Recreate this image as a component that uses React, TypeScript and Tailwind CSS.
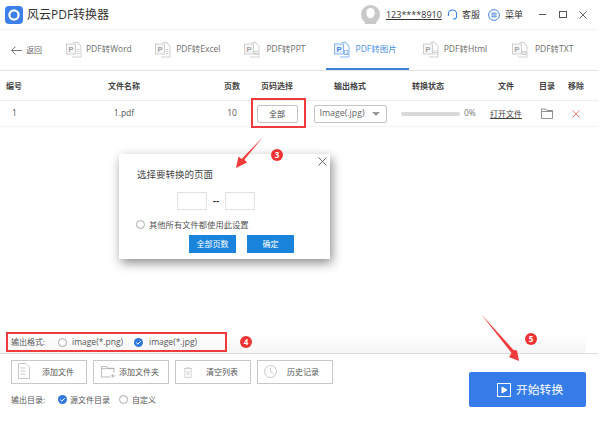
import React from "react";

const FONT = "font-['Open_Sans','Noto_Sans_CJK_SC',sans-serif]";

type Mark = "word" | "excel" | "ppt" | "img" | "html" | "txt";

function TabIcon({ color, mark, active }: { color: string; mark: Mark; active?: boolean }) {
  return (
    <svg width="16" height="17" viewBox="0 0 16 17" fill="none" stroke={color} strokeWidth="0.7">
      <path d="M7.5 1.5 H11 L15 5 V16 H6" fill="#fff" />
      <path d="M10.5 0.5 L14 3.5" opacity="0.6" />
      <rect x="0.5" y="3" width="9" height="10" fill={active ? "#eaf3fd" : "#f7f7f7"} />
      <text x="2.4" y="11" fontSize="7.5" fontWeight="bold" fill={active ? "#3f86e0" : "#a2a2a2"} stroke="none" fontFamily="Liberation Sans">P</text>
      {(mark === "word" || mark === "excel") && <path d="M10.5 8.5h3M10.5 10.5h3M10.5 12.5h3" />}
      {mark === "ppt" && <path d="M10.5 10.5h3.5v3h-3.5zM10.5 12l3.5 1.5" />}
      {mark === "img" && <path d="M10.5 9.5h3.5v4h-3.5zM12 12l2 1.5" />}
      {mark === "html" && <path d="M11 9v5M14 9v5M11 11.5h3" />}
      {mark === "txt" && <path d="M10.5 10.5h3.5v3h-3.5zM10.5 12h3.5" />}
    </svg>
  );
}

function Tab({ label, mark, active, gap }: { label: string; mark: Mark; active?: boolean; gap: string }) {
  return (
    <div className={`w-[83px] mr-[6.2px] h-full flex items-center pl-[8px] border-b-[2px] ${gap} ${active ? "border-[#3f7fd8]" : "border-transparent"}`}>
      <TabIcon color={active ? "#5b9be6" : "#bdbdbd"} mark={mark} active={active} />
      <span className={`text-[8.5px] whitespace-nowrap ${active ? "text-[#4a8fe3]" : "text-[#6e6e6e]"}`}>{label}</span>
    </div>
  );
}

function Radio({ checked }: { checked?: boolean }) {
  if (checked) {
    return (
      <svg width="9" height="9" viewBox="0 0 9 9" className="shrink-0">
        <circle cx="4.5" cy="4.5" r="4.5" fill="#2f78e0" />
        <path d="M2.2 4.6 L3.9 6.2 L6.8 3" stroke="#fff" strokeWidth="1" fill="none" />
      </svg>
    );
  }
  return <span className="w-[9px] h-[9px] shrink-0 rounded-full border border-[#a8a8a8] bg-white" />;
}

function ToolButton({ label, icon, pad }: { label: string; icon: React.ReactNode; pad: string }) {
  return (
    <div className={`w-[76px] h-[24px] border border-[#c8c8c8] bg-white flex items-center relative ${pad}`}>
      {icon}
      <span className="text-[8px] text-[#555] whitespace-nowrap">{label}</span>
    </div>
  );
}

function Badge({ n, cls }: { n: string; cls: string }) {
  return (
    <div className={`absolute ${cls} w-[12px] h-[12px] rounded-full bg-[#ee3333] text-white text-[8px] font-bold flex items-center justify-center`}>{n}</div>
  );
}

const grid = "grid grid-cols-[36px_176px_40px_50px_96px_84px_48px_34px_24px] items-center";

export default function App() {
  return (
    <div className={`relative w-[600px] h-[421px] overflow-hidden bg-white ${FONT}`}>
      <div className="w-[598px] h-full flex flex-col">
        {/* Title bar */}
        <div className="h-[30px] shrink-0 flex items-center border-b border-[#f2f2f2]">
          <svg width="18" height="18" viewBox="0 0 18 18" className="ml-[5px]">
            <rect width="18" height="18" rx="4" fill="#3d80ea" />
            <circle cx="9" cy="9" r="4.6" fill="none" stroke="#fff" strokeWidth="2.2" />
          </svg>
          <span className="ml-[4px] text-[12px] text-[#333]">风云PDF转换器</span>
          <div className="flex-1" />
          <svg width="19" height="19" viewBox="0 0 19 19">
            <circle cx="9.5" cy="9.5" r="9.5" fill="#c9c9c9" />
            <ellipse cx="9.5" cy="8" rx="4.2" ry="5.2" fill="#fff" />
            <path d="M3.5 19 C5 13 14 13 15.5 19 Z" fill="#c9c9c9" />
          </svg>
          <span className="ml-[6px] text-[9px] text-[#333] underline w-[54px] whitespace-nowrap">123****8910</span>
          <svg width="11" height="13" viewBox="0 0 12 13" fill="none" className="ml-[7px]" stroke="#2f78e0" strokeWidth="1.1">
            <path d="M1.5 8 V6 a4.5 4.5 0 0 1 9 0 V8" />
            <path d="M10.5 8 C10.5 10.5 8.5 11.5 6.5 11.5" />
          </svg>
          <span className="ml-[4px] text-[9px] text-[#333]">客服</span>
          <svg width="12" height="12" viewBox="0 0 12 12" fill="none" className="ml-[8px]" stroke="#2f78e0" strokeWidth="0.9">
            <circle cx="6" cy="6" r="5.4" />
            <path d="M3.3 4.2h5.4M3.3 6h5.4M3.3 7.8h5.4" />
          </svg>
          <span className="ml-[5px] text-[9px] text-[#333]">菜单</span>
          <div className="ml-[16px] w-[7px] h-[1px] bg-[#555]" />
          <div className="ml-[13px] w-[8px] h-[7px] border border-[#555]" />
          <svg width="8" height="8" viewBox="0 0 8 8" className="ml-[12px] mr-[11px]" stroke="#555" strokeWidth="0.9">
            <path d="M0.5 0.5 L7.5 7.5 M7.5 0.5 L0.5 7.5" />
          </svg>
        </div>

        {/* Tabs */}
        <div className="h-[41px] shrink-0 flex border-b border-[#e2e2e2]">
          <div className="w-[58px] flex items-center pl-[11px] gap-[4px]">
            <svg width="11" height="9" viewBox="0 0 11 9" fill="none" stroke="#555" strokeWidth="0.8">
              <path d="M4.5 0.5 L0.7 4.5 L4.5 8.5 M0.7 4.5 H11" />
            </svg>
            <span className="text-[8px] text-[#666]">返回</span>
          </div>
          <Tab label="PDF转Word" mark="word" gap="gap-[4px]" />
          <Tab label="PDF转Excel" mark="excel" gap="gap-[5px]" />
          <Tab label="PDF转PPT" mark="ppt" gap="gap-[6px]" />
          <Tab label="PDF转图片" mark="img" gap="gap-[6px]" active />
          <Tab label="PDF转Html" mark="html" gap="gap-[5px]" />
          <Tab label="PDF转TXT" mark="txt" gap="gap-[7px]" />
        </div>

        {/* Table header */}
        <div className={`${grid} h-[30px] shrink-0 border-b border-[#ececec] text-[8px] font-semibold text-[#444] text-center`}>
          <span className="text-left pl-[6px]">编号</span>
          <span>文件名称</span>
          <span>页数</span>
          <span>页码选择</span>
          <span>输出格式</span>
          <span className="pr-[24px]">转换状态</span>
          <span>文件</span>
          <span>目录</span>
          <span>移除</span>
        </div>

        {/* Table row */}
        <div className={`${grid} h-[26px] shrink-0 border-b border-[#f2f2f2] text-[8.5px] text-[#555] text-center`}>
          <span className="text-left pl-[12px]">1</span>
          <span>1.pdf</span>
          <span>10</span>
          <div className="flex justify-center">
            <div className="w-[41px] h-[18px] border border-[#c4c4c4] rounded-[2px] flex items-center justify-center text-[8px] text-[#444]">全部</div>
          </div>
          <div className="flex justify-center">
            <div className="w-[73px] h-[18px] border border-[#c4c4c4] rounded-[2px] flex items-center justify-between pl-[5px] pr-[6px] text-[8.8px] text-[#666]">
              <span>Image(.jpg)</span>
              <span className="w-0 h-0 border-l-[4px] border-r-[4px] border-t-[4px] border-l-transparent border-r-transparent border-t-[#999]" />
            </div>
          </div>
          <div className="flex items-center pl-[3px] gap-[4px]">
            <div className="w-[59px] h-[4px] rounded-full bg-[#d9d9d9]" />
            <span className="text-[8.5px] text-[#777]">0%</span>
          </div>
          <span className="text-[8px] text-[#444] underline whitespace-nowrap">打开文件</span>
          <div className="flex justify-center">
            <svg width="12" height="11" viewBox="0 0 12 11" fill="none" stroke="#777" strokeWidth="0.8">
              <path d="M0.5 2.5 V1 H5 L6 2.5 H11.5 V10.5 H0.5 Z M0.5 3.5 H11.5" />
            </svg>
          </div>
          <div className="flex justify-center">
            <svg width="8" height="8" viewBox="0 0 8 8" stroke="#ee6a6a" strokeWidth="0.9">
              <path d="M0.5 0.5 L7.5 7.5 M7.5 0.5 L0.5 7.5" />
            </svg>
          </div>
        </div>

        <div className="flex-1" />

        {/* Output format */}
        <div className="h-[21px] shrink-0 border-b border-[#dcdcdc]">
          <div className="h-full mr-[12px] pb-[2px] bg-gradient-to-b from-white to-[#f6f6f6] flex items-center pl-[11px] text-[8.5px] text-[#555]">
            <span className="w-[47px] text-[8px]">输出格式:</span>
            <Radio />
            <span className="ml-[5px] w-[62px]">image(*.png)</span>
            <Radio checked />
            <span className="ml-[6px]">image(*.jpg)</span>
          </div>
        </div>

        {/* Bottom */}
        <div className="h-[67px] shrink-0 flex pl-[11px] pr-[12px]">
          <div className="flex-1 pt-[6px]">
            <div className="flex gap-[6px]">
              <ToolButton
                label="添加文件"
                pad="pl-[30px]"
                icon={
                  <svg width="12" height="16" viewBox="0 0 12 16" fill="none" stroke="#bcbcbc" strokeWidth="0.8" className="absolute left-[6px] top-[2px]">
                    <path d="M0.5 0.5 H8 L11.5 4 V15.5 H0.5 Z M2.5 5h5M2.5 8h5M2.5 11h5" />
                  </svg>
                }
              />
              <ToolButton
                label="添加文件夹"
                pad="pl-[25px]"
                icon={
                  <svg width="15" height="14" viewBox="0 0 18 14" fill="none" stroke="#999" strokeWidth="0.8" className="absolute left-[7px] top-[4px]">
                    <path d="M0.5 3 V0.5 H7 L8 2.5 H15.5 V8 M11 13 H0.5 V3 H15.5 M14 9.5 V14 M11.5 11.7 H17" />
                  </svg>
                }
              />
              <ToolButton
                label="清空列表"
                pad="pl-[30px]"
                icon={
                  <svg width="8" height="13" viewBox="0 0 9 12" fill="none" stroke="#c4c4c4" strokeWidth="0.8" className="absolute left-[8px] top-[5px]">
                    <path d="M0 1.5 H9 M3 1.5 V0.5 H6 V1.5 M1 1.5 V11.5 H8 V1.5 M3.5 4 V9 M5.5 4 V9" />
                  </svg>
                }
              />
              <ToolButton
                label="历史记录"
                pad="pl-[29px]"
                icon={
                  <svg width="13" height="13" viewBox="0 0 13 13" fill="none" stroke="#bcbcbc" strokeWidth="0.8" className="absolute left-[6px] top-[4px]">
                    <circle cx="6.5" cy="6.5" r="6" />
                    <path d="M6.5 2.5 V6.5 L9.5 9" />
                  </svg>
                }
              />
            </div>
            <div className="flex items-center mt-[10px] text-[8px] text-[#555] leading-[11px]">
              <span className="w-[47px]">输出目录:</span>
              <Radio checked />
              <span className="ml-[3px] w-[49px]">源文件目录</span>
              <Radio />
              <span className="ml-[4px]">自定义</span>
            </div>
          </div>
          <div className="w-[117px] h-[35px] mt-[18px] bg-[#367ce8] rounded-[2px] flex items-center pl-[28px] gap-[5px] text-white text-[11.8px]">
            <svg width="14" height="14" viewBox="0 0 14 14" fill="none" stroke="#fff" strokeWidth="1">
              <rect x="0.5" y="0.5" width="13" height="13" />
              <path d="M5 4 L10 7 L5 10 Z" fill="#fff" />
            </svg>
            <span>开始转换</span>
          </div>
        </div>
      </div>

      {/* Dialog */}
      <div className="absolute left-[119px] top-[154px] w-[211px] h-[105px] bg-white shadow-[2px_4px_10px_rgba(0,0,0,0.45)]">
        <svg width="9" height="9" viewBox="0 0 9 9" className="absolute right-[3px] top-[3px]" stroke="#555" strokeWidth="0.9">
          <path d="M0.5 0.5 L8.5 8.5 M8.5 0.5 L0.5 8.5" />
        </svg>
        <div className="pl-[18px] pt-[14px] text-[9.5px] text-[#444] leading-[13px]">选择要转换的页面</div>
        <div className="flex items-center mt-[11px] pl-[58px]">
          <div className="w-[30px] h-[18px] border border-[#e2e2e2]" />
          <span className="w-[18px] text-center text-[10px] font-semibold text-[#222]">--</span>
          <div className="w-[30px] h-[18px] border border-[#e2e2e2]" />
        </div>
        <div className="flex items-center mt-[9px] pl-[17px] text-[8.3px] text-[#555] leading-[11px]">
          <Radio />
          <span className="ml-[4px]">其他所有文件都使用此设置</span>
        </div>
        <div className="flex mt-[5px] pl-[70px] gap-[11px] text-[8px] text-white">
          <div className="w-[47px] h-[18px] bg-[#1a84dd] flex items-center justify-center">全部页数</div>
          <div className="w-[47px] h-[18px] bg-[#1a84dd] flex items-center justify-center">确定</div>
        </div>
      </div>

      {/* Annotations */}
      <div className="absolute left-[251px] top-[98px] w-[55px] h-[30px] border-[2px] border-[#ef3b3b]" />
      <div className="absolute left-[6px] top-[332px] w-[221px] h-[20px] border-[2px] border-[#ef3b3b]" />
      <svg className="absolute left-[235px] top-[136px]" width="29" height="33" viewBox="0 0 29 33">
        <polygon points="28,1 9.5,23.5 12,26.5 1,32 3.5,20.5 6.5,23" fill="#ef3b3b" />
      </svg>
      <svg className="absolute left-[480px] top-[313px]" width="40" height="50" viewBox="0 0 40 50">
        <polygon points="1,1 33.5,37 37,37.5 39,48 29,44 31.5,40" fill="#ef3b3b" />
      </svg>
      <Badge n="3" cls="left-[271px] top-[149px]" />
      <Badge n="4" cls="left-[240px] top-[336px]" />
      <Badge n="5" cls="left-[525px] top-[333px]" />
    </div>
  );
}
